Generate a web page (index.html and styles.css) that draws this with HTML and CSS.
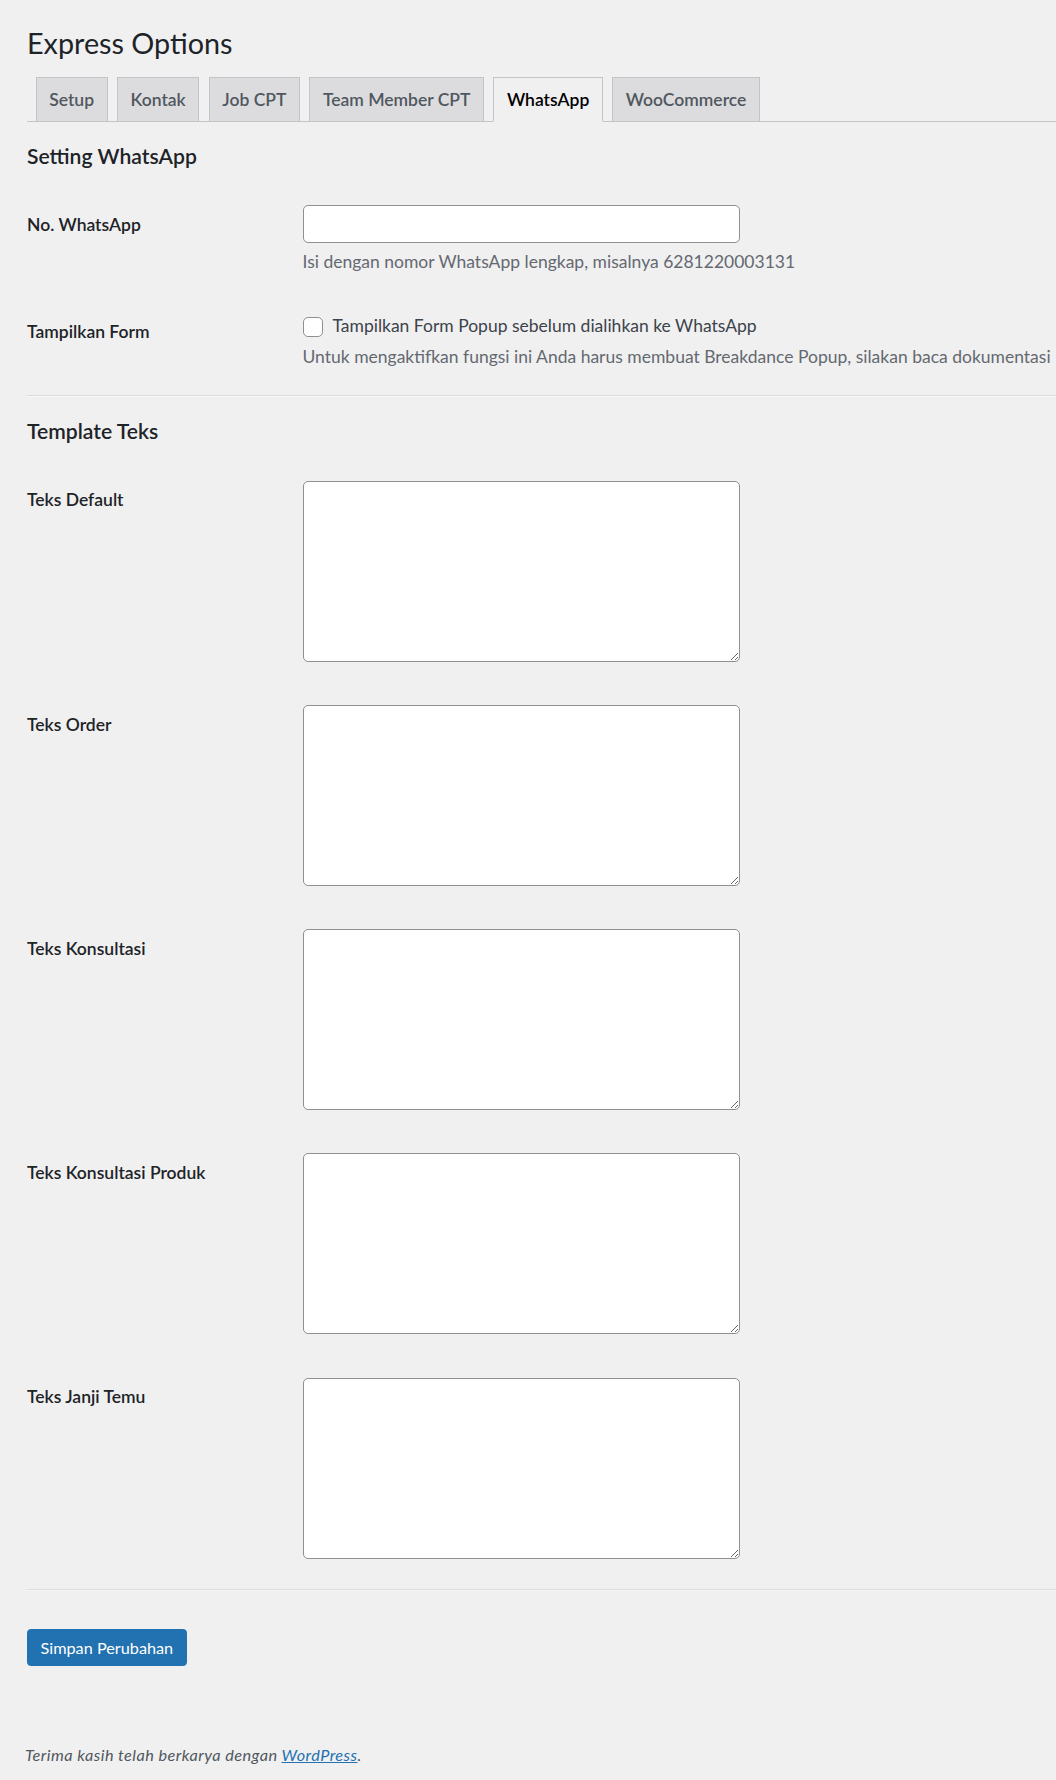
FILE: index.html
```html
<!DOCTYPE html>
<html lang="id">
<head>
    <meta charset="UTF-8">
    <meta name="viewport" content="width=device-width, initial-scale=1.0">
    <title>Express Options</title>
    <link rel="stylesheet" href="styles.css">
</head>
<body>
    <div class="wrap">
        <h1 class="page-title">Express Options</h1>

        <!-- Tabs -->
        <nav class="nav-tabs">
            <a class="nav-tab" href="#">Setup</a>
            <a class="nav-tab" href="#">Kontak</a>
            <a class="nav-tab" href="#">Job CPT</a>
            <a class="nav-tab" href="#">Team Member CPT</a>
            <a class="nav-tab nav-tab-active" href="#">WhatsApp</a>
            <a class="nav-tab" href="#">WooCommerce</a>
        </nav>

        <form class="settings-form">
            <h2 class="section-title">Setting WhatsApp</h2>
            <div class="form-table">
                <div class="form-row">
                    <label class="field-label" for="wa_number">No. WhatsApp</label>
                    <div class="field">
                        <input type="text" id="wa_number" name="wa_number" class="regular-text">
                        <p class="description">Isi dengan nomor WhatsApp lengkap, misalnya 6281220003131</p>
                    </div>
                </div>
                <div class="form-row">
                    <div class="field-label">Tampilkan Form</div>
                    <div class="field">
                        <label class="check-label" for="wa_popup"><input type="checkbox" id="wa_popup" name="wa_popup" class="checkbox"> Tampilkan Form Popup sebelum dialihkan ke WhatsApp</label>
                        <p class="description nowrap">Untuk mengaktifkan fungsi ini Anda harus membuat Breakdance Popup, silakan baca dokumentasi</p>
                    </div>
                </div>
            </div>

            <hr>

            <h2 class="section-title">Template Teks</h2>
            <div class="form-table">
                <div class="form-row">
                    <label class="field-label" for="text_default">Teks Default</label>
                    <div class="field"><textarea id="text_default" name="text_default" class="large-text"></textarea></div>
                </div>
                <div class="form-row">
                    <label class="field-label" for="text_order">Teks Order</label>
                    <div class="field"><textarea id="text_order" name="text_order" class="large-text"></textarea></div>
                </div>
                <div class="form-row">
                    <label class="field-label" for="text_consult">Teks Konsultasi</label>
                    <div class="field"><textarea id="text_consult" name="text_consult" class="large-text"></textarea></div>
                </div>
                <div class="form-row">
                    <label class="field-label" for="text_product">Teks Konsultasi Produk</label>
                    <div class="field"><textarea id="text_product" name="text_product" class="large-text"></textarea></div>
                </div>
                <div class="form-row">
                    <label class="field-label" for="text_meeting">Teks Janji Temu</label>
                    <div class="field"><textarea id="text_meeting" name="text_meeting" class="large-text"></textarea></div>
                </div>
            </div>

            <hr>

            <p class="submit"><button type="button" class="button-primary">Simpan Perubahan</button></p>
        </form>
    </div>

    <footer class="footer">
        <p>Terima kasih telah berkarya dengan <a href="#">WordPress</a>.</p>
    </footer>
</body>
</html>
```

FILE: styles.css
```css
body {
    font-family: Lato, "Noto Sans", sans-serif;
    font-size: 16.25px;
    line-height: 1.4;
    color: #3c434a;
    background-color: #f0f0f1;
    margin: 0;
    min-height: 100vh;
    display: flex;
    flex-direction: column;
}
.wrap {
    padding: 12.5px 0 0 27px;
    overflow: hidden;
}
.page-title {
    margin: 0;
    padding: 12.25px 0 4px;
    font-size: 28.75px;
    font-weight: 400;
    line-height: 1.3;
    color: #1d2327;
}

/* tabs */
.nav-tabs {
    display: flex;
    margin-top: 11.25px;
    border-bottom: 1px solid #c3c4c7;
}
.nav-tab {
    margin: 0 0 -1px 9.5px;
    padding: 6.25px 12.5px;
    border: 1px solid #c3c4c7;
    background: #dcdcde;
    color: #50575e;
    font-size: 17.5px;
    font-weight: 600;
    line-height: 30px;
    text-decoration: none;
    white-space: nowrap;
}
.nav-tab:first-child {
    margin-left: 8.75px;
}
.nav-tab-active {
    background: #f0f0f1;
    color: #000;
    border-bottom-color: #f0f0f1;
}

/* form */
.section-title {
    margin: 23px 0 19px;
    font-size: 21.125px;
    font-weight: 600;
    line-height: 22.75px;
    color: #1d2327;
}
.form-row {
    display: grid;
    grid-template-columns: 263px minmax(0, 1fr);
}
.field-label {
    padding: 27.5px 12.5px 22.5px 0;
    font-size: 17.5px;
    font-weight: 600;
    line-height: 1.3;
    color: #1d2327;
}
.field {
    padding: 18.75px 12.5px;
    font-size: 17.5px;
    line-height: 1.4;
}
.regular-text, .large-text {
    display: block;
    box-sizing: border-box;
    width: 437px;
    border: 1px solid #8c8f94;
    border-radius: 5px;
    background: #fff;
    color: #2c3338;
    font-family: inherit;
    font-size: 17.5px;
}
.regular-text {
    height: 37.5px;
    padding: 0 10px;
}
.large-text {
    height: 181px;
    margin: 0 0 5.75px;
    padding: 2.5px 10px;
}
.check-label {
    display: inline-block;
    padding-top: 1px;
    color: #3c434a;
}
.checkbox {
    appearance: none;
    width: 20px;
    height: 20px;
    margin: 0 6px 0 0;
    vertical-align: middle;
    border: 1px solid #8c8f94;
    border-radius: 5px;
    background: #fff;
}
.description {
    margin: 6px 0 0;
    font-size: 17.5px;
    line-height: 1.5;
    color: #646970;
}
.nowrap {
    white-space: nowrap;
}
hr {
    margin: 6px 0;
    height: 0;
    border: 0;
    border-top: 1px solid #dcdcde;
    border-bottom: 1px solid #f6f7f7;
}
.submit {
    margin: 25px 0 16px;
    padding: 12.5px 0;
}
.button-primary {
    min-height: 37.5px;
    padding: 0 12.5px;
    border: 1px solid #2271b1;
    border-radius: 3.75px;
    background: #2271b1;
    color: #fff;
    font-family: inherit;
    font-size: 16.25px;
    line-height: 35px;
    cursor: pointer;
}

/* footer */
.footer {
    margin-top: auto;
    padding: 12.5px 25px;
    color: #50575e;
}
.footer p {
    margin: 0;
    font-style: italic;
    line-height: 1.55;
    letter-spacing: 0.45px;
}
.footer a {
    color: #2271b1;
}
```
